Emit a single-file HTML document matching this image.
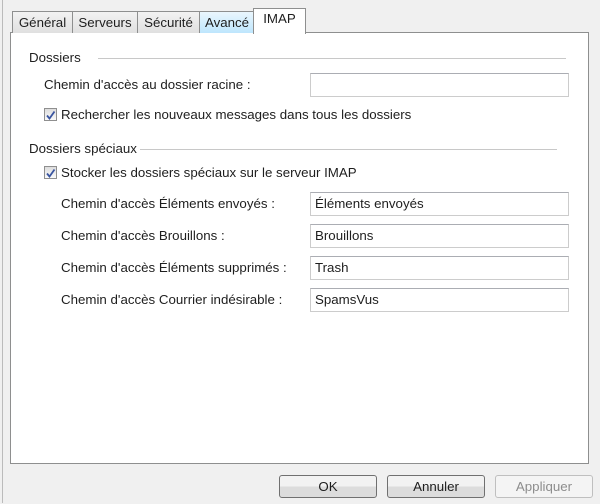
<!DOCTYPE html><html><head><style>
body{margin:0;width:600px;height:504px;background:#f0f0f0;font-family:"Liberation Sans",sans-serif;font-size:13.3px;color:#1e1e1e;position:relative;overflow:hidden}
.a{position:absolute}
.outer{left:2px;top:0;width:597px;height:503px;border-left:1px solid #bbb}
.panel{left:10px;top:32px;width:577px;height:430px;background:#fff;border:1px solid #8e8f8f}
.tab{top:11px;height:21px;border:1px solid #8e8f8f;border-bottom:none;background:linear-gradient(#f2f2f2,#e0e0e0);line-height:21px;text-align:center;font-size:13.3px}
.in{left:310px;width:253px;height:22px;border:1px solid #ccc;border-top-color:#abadb3;background:#fff;line-height:22px;padding-left:4px;box-sizing:content-box}
.cb{width:11px;height:11px;border:1px solid #8f8f8f;background:linear-gradient(#ddd,#fafafa)}
.hr{height:1px;background:#c8c8c8}
.btn{top:475px;width:96px;height:21px;border:1px solid #707070;border-radius:3px;background:linear-gradient(#f2f2f2 50%,#dcdcdc 50%);text-align:center;line-height:21px;font-size:13.3px}
</style></head><body>
<div class="a outer"></div>
<div class="a panel"></div>
<div class="a tab" style="left:12px;width:59px">Général</div>
<div class="a tab" style="left:72px;width:64px">Serveurs</div>
<div class="a tab" style="left:137px;width:61px">Sécurité</div>
<div class="a tab" style="left:199px;width:54px;background:linear-gradient(#eaf6fd,#bee6fd)">Avancé</div>
<div class="a tab" style="left:253px;top:8px;height:25px;width:51px;background:#fff;line-height:20px">IMAP</div>
<div class="a" style="left:29px;top:50px">Dossiers</div>
<div class="a hr" style="left:98px;top:58px;width:468px"></div>
<div class="a" style="left:44px;top:77px">Chemin d'accès au dossier racine :</div>
<div class="a in" style="top:73px"></div>
<div class="a cb" style="left:44px;top:108px"><svg width="11" height="11"><path d="M2 5.5L4.5 8.5L9.5 1.5" stroke="#3a55a0" stroke-width="1.8" fill="none"/></svg></div>
<div class="a" style="left:61px;top:107px">Rechercher les nouveaux messages dans tous les dossiers</div>
<div class="a" style="left:29px;top:141px">Dossiers spéciaux</div>
<div class="a hr" style="left:140px;top:149px;width:417px"></div>
<div class="a cb" style="left:44px;top:166px"><svg width="11" height="11"><path d="M2 5.5L4.5 8.5L9.5 1.5" stroke="#3a55a0" stroke-width="1.8" fill="none"/></svg></div>
<div class="a" style="left:61px;top:165px">Stocker les dossiers spéciaux sur le serveur IMAP</div>
<div class="a" style="left:61px;top:196px">Chemin d'accès Éléments envoyés :</div>
<div class="a in" style="top:192px">Éléments envoyés</div>
<div class="a" style="left:61px;top:228px">Chemin d'accès Brouillons :</div>
<div class="a in" style="top:224px">Brouillons</div>
<div class="a" style="left:61px;top:260px">Chemin d'accès Éléments supprimés :</div>
<div class="a in" style="top:256px">Trash</div>
<div class="a" style="left:61px;top:292px">Chemin d'accès Courrier indésirable :</div>
<div class="a in" style="top:288px">SpamsVus</div>
<div class="a btn" style="left:279px">OK</div>
<div class="a btn" style="left:387px">Annuler</div>
<div class="a btn" style="left:495px;border-color:#bfbfbf;background:#f4f4f4;color:#8d8d8d">Appliquer</div>
</body></html>
